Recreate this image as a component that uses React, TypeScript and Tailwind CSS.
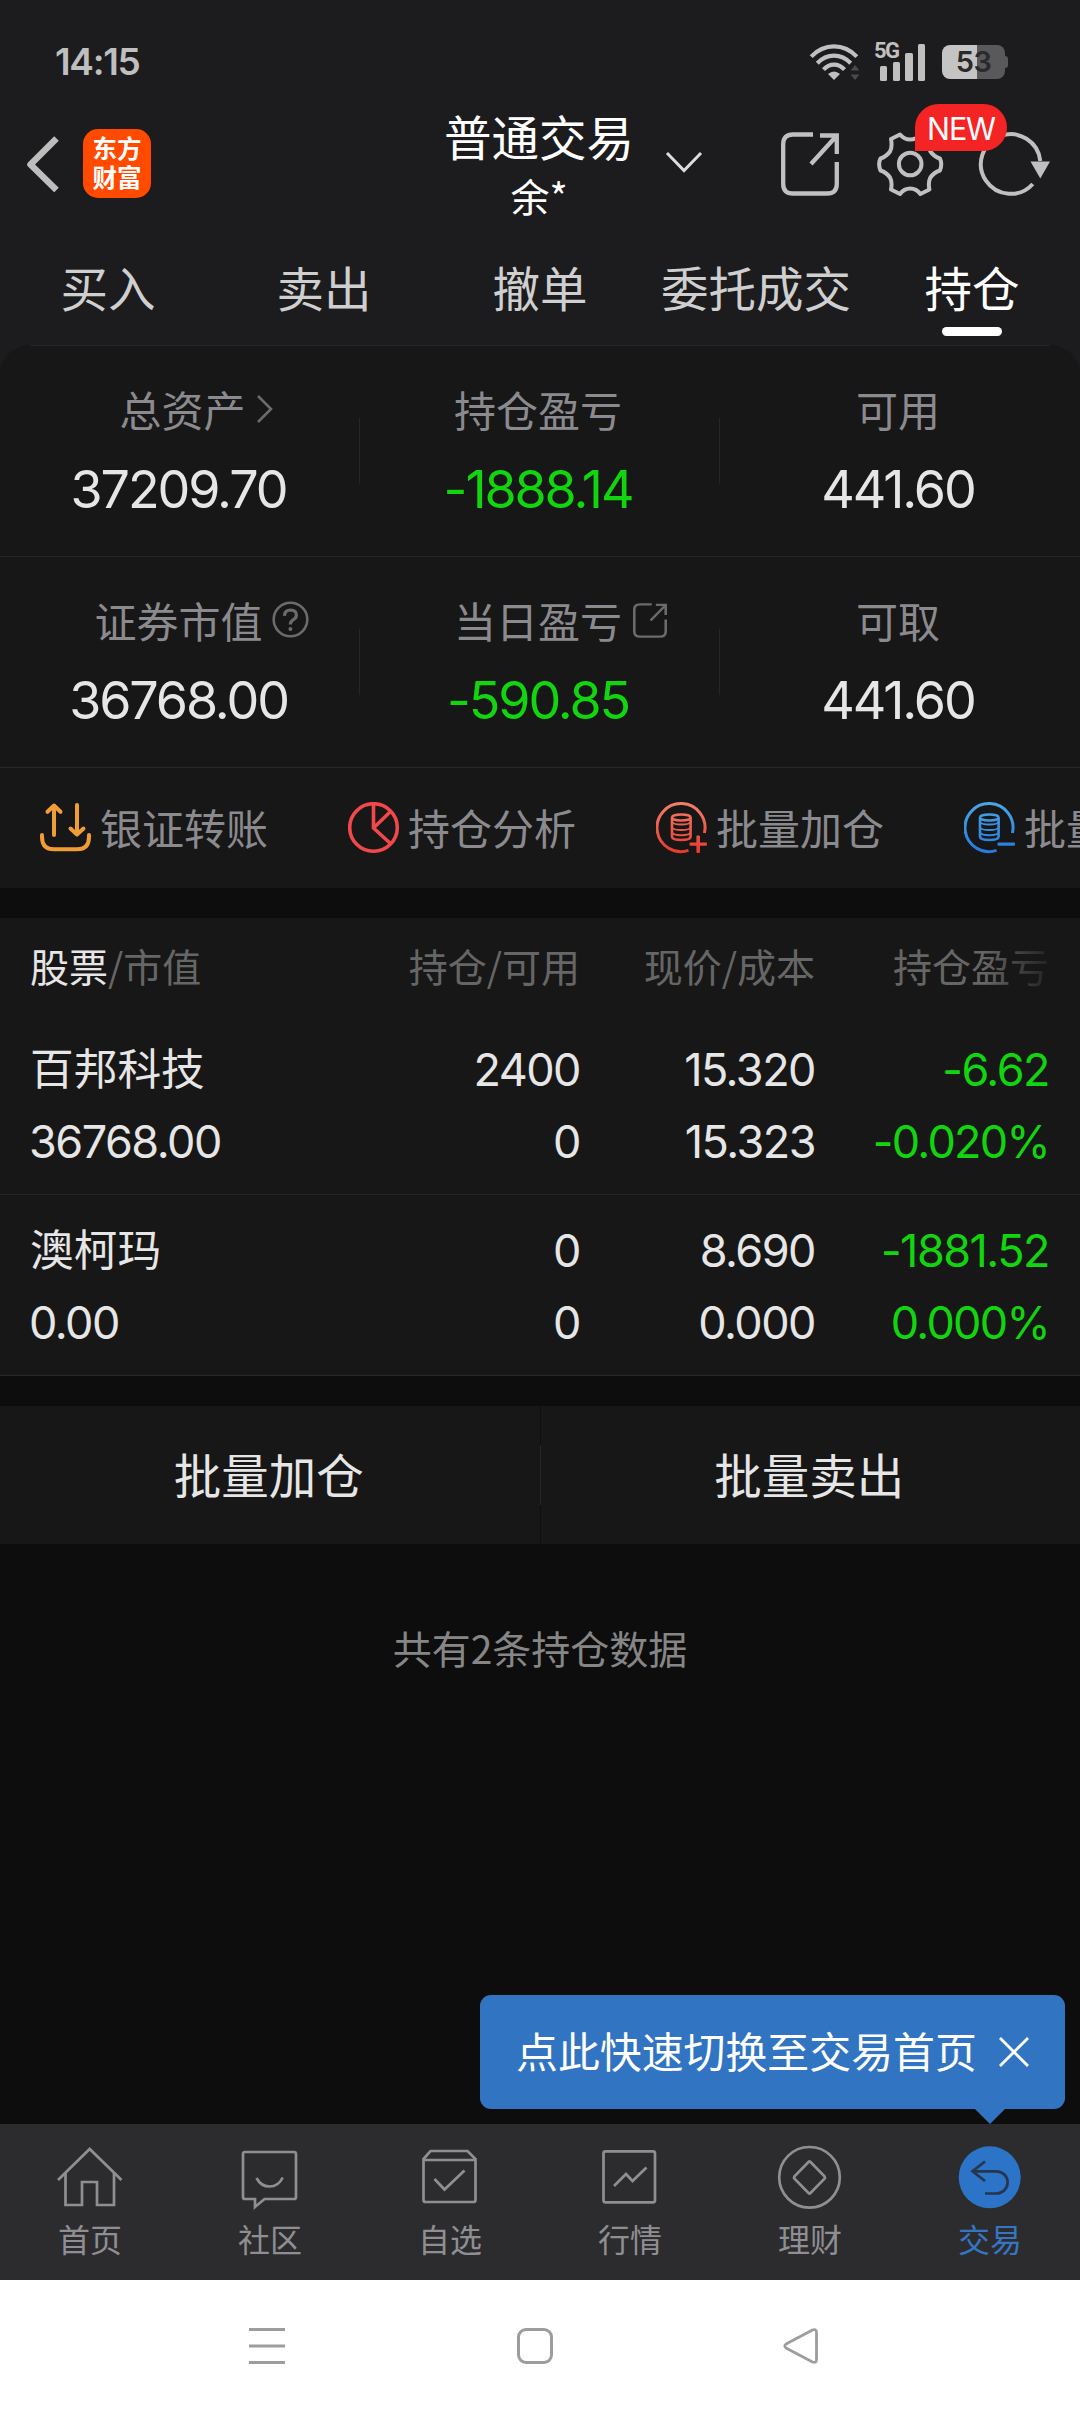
import type { ReactNode } from 'react';

// Type definitions
type Metric = {
  label: string;
  value: string;
  loss?: boolean;
  icon?: ReactNode;
};

type Holding = {
  name: string;
  marketValue: string;
  amount: string;
  available: string;
  price: string;
  cost: string;
  profit: string;
  percent: string;
};

const holdings: Holding[] = [
  {
    name: '百邦科技',
    marketValue: '36768.00',
    amount: '2400',
    available: '0',
    price: '15.320',
    cost: '15.323',
    profit: '-6.62',
    percent: '-0.020%',
  },
  {
    name: '澳柯玛',
    marketValue: '0.00',
    amount: '0',
    available: '0',
    price: '8.690',
    cost: '0.000',
    profit: '-1881.52',
    percent: '0.000%',
  },
];

const tabs = ['买入', '卖出', '撤单', '委托成交', '持仓'];

function ShareIcon({ className, strokeWidth }: { className: string; strokeWidth: number }) {
  return (
    <svg className={className} viewBox="0 0 58 64" fill="none" stroke="currentColor" strokeWidth={strokeWidth} preserveAspectRatio="none">
      <path d="M32 2.5H12Q2.2 2.5 2.2 12V52Q2.2 61.5 12 61.5H46Q55.8 61.5 55.8 52V30" />
      <path d="M39 3.5H55.8V22M55 4.5L30 32" />
    </svg>
  );
}

const metricRows: Metric[][] = [
  [
    {
      label: '总资产',
      value: '37209.70',
      icon: (
        <svg className="ml-[10px] h-[28px] w-[18px] shrink-0 text-[#6b6b6b]" viewBox="0 0 18 28" fill="none" stroke="currentColor" strokeWidth={2.6}>
          <path d="M2 1L15 14L2 27" />
        </svg>
      ),
    },
    { label: '持仓盈亏', value: '-1888.14', loss: true },
    { label: '可用', value: '441.60' },
  ],
  [
    {
      label: '证券市值',
      value: '36768.00',
      icon: (
        <svg className="mb-px ml-[9px] h-[37px] w-[37px] shrink-0 text-[#6b6b6b]" viewBox="0 0 37 37" fill="none" stroke="currentColor" strokeWidth={2.6}>
          <circle cx="18.5" cy="18.5" r="16.8" />
          <path d="M12.5 14.8Q12.8 9 18.5 9Q24.4 9.2 24.4 14.2Q24.4 17 21 18.8Q18.4 20.4 18.4 23.6" strokeWidth={3.2} />
          <circle cx="18.4" cy="28" r="2" fill="currentColor" stroke="none" />
        </svg>
      ),
    },
    {
      label: '当日盈亏',
      value: '-590.85',
      loss: true,
      icon: <ShareIcon className="ml-[11px] h-[35px] w-[34px] shrink-0 text-[#6b6b6b]" strokeWidth={4.4} />,
    },
    { label: '可取', value: '441.60' },
  ],
];

// Stack of coins inside an open ring, shared by the batch actions
function CoinsIcon({ id, from, to, plus }: { id: string; from: string; to: string; plus?: boolean }) {
  return (
    <svg className="h-[52px] w-[52px] shrink-0" viewBox="0 0 52 52" fill="none" stroke={`url(#${id})`} strokeWidth={3}>
      <defs>
        <linearGradient id={id} gradientUnits="userSpaceOnUse" x1="0" y1="0" x2="0" y2="52">
          <stop offset="0" stopColor={from} />
          <stop offset="1" stopColor={to} />
        </linearGradient>
      </defs>
      <path d="M48.4 31A24 24 0 1 0 32.5 48.4" />
      <ellipse cx="25.3" cy="15.5" rx="9.3" ry="3" strokeWidth={2.4} />
      <path d="M16 15.5V34.5Q16 38 25.3 38Q34.6 38 34.6 34.5V15.5" strokeWidth={2.6} />
      <path d="M16 20Q17 22.5 25.3 22.5Q33.6 22.5 34.6 20M16 25.5Q17 28 25.3 28Q33.6 28 34.6 25.5M16 30.7Q17 33.2 25.3 33.2Q33.6 33.2 34.6 30.7" strokeWidth={2} />
      <rect x="33.5" y="40.4" width="17.5" height="3.4" rx="1" fill={`url(#${id})`} stroke="none" />
      {plus && <rect x="40.4" y="33.5" width="3.6" height="17.5" rx="1" fill={`url(#${id})`} stroke="none" />}
    </svg>
  );
}

const actions = [
  {
    label: '银证转账',
    icon: (
      <svg className="h-[52px] w-[52px] shrink-0 text-[#f09d35]" viewBox="0 0 52 52" fill="none" stroke="currentColor" strokeWidth={4} strokeLinecap="round" strokeLinejoin="round">
        <path d="M14 33V4M7.5 9.8L14 3.5L20.5 9.8" />
        <path d="M37 3V32M30.5 26.5L37 32.5L43.5 26.5" />
        <path d="M2 33V35Q2 47.3 14 47.3H37Q49 47.3 49 35V33" />
      </svg>
    ),
  },
  {
    label: '持仓分析',
    icon: (
      <svg className="h-[52px] w-[52px] shrink-0 text-[#f0484b]" viewBox="0 0 52 52" fill="none" stroke="currentColor" strokeWidth={3.6}>
        <circle cx="25.5" cy="25.5" r="23.8" />
        <path d="M25.5 2V26L43 42M25.5 26L42.5 9.5" />
      </svg>
    ),
  },
  { label: '批量加仓', icon: <CoinsIcon id="coins-add" from="#f4806c" to="#e8382a" plus /> },
  { label: '批量卖出', icon: <CoinsIcon id="coins-sell" from="#4ba6e6" to="#2479dd" /> },
];

const navItems = [
  {
    label: '首页',
    icon: (
      <>
        <path d="M4 39L35.7 8L67.5 39" />
        <path d="M11.5 32V64H28V41H43V64H60V32" />
      </>
    ),
  },
  {
    label: '社区',
    icon: (
      <>
        <path d="M11 11H60Q62 11 62 13V56Q62 58 60 58H30.5L21 66V58H11Q9 58 9 56V13Q9 11 11 11Z" />
        <path d="M22.5 37Q27 45.5 35.5 45.5Q44.5 45.5 48.7 36.5" />
      </>
    ),
  },
  {
    label: '自选',
    icon: (
      <>
        <path d="M9.5 18L16.5 10H53.5L61.5 18V59Q61.5 61 59.5 61H11.5Q9.5 61 9.5 59ZM9.5 19H61.5" />
        <path d="M20.5 38L30.5 48.5L50.5 29.5" />
      </>
    ),
  },
  {
    label: '行情',
    icon: (
      <>
        <rect x="9.5" y="10.3" width="51.5" height="51" rx="2" />
        <path d="M20 45L32 33L38.5 40L52.5 26.5" />
      </>
    ),
  },
  {
    label: '理财',
    icon: (
      <>
        <circle cx="35.5" cy="36.3" r="30.3" />
        <path d="M34.5 21L20.5 35.3Q19.6 36.5 20.5 37.7L34.5 52Q35.5 53 36.5 52L50.5 37.7Q51.4 36.5 50.5 35.3L36.5 21Q35.5 20 34.5 21Z" />
      </>
    ),
  },
  {
    label: '交易',
    active: true,
    icon: (
      <>
        <circle cx="35.7" cy="36.3" r="31" fill="#2b74c8" stroke="none" />
        <path d="M31 20.5L18.5 30.3L31 40M18.5 30.3H42.5A11 11 0 0 1 42.5 52.5H31" stroke="#26364f" />
      </>
    ),
  },
];

function StatusBar() {
  return (
    <div className="flex h-[100px] items-center pt-6 pr-[75px] pl-[55px]">
      <span className="font-['Inter',sans-serif] text-[37px] font-semibold tracking-[-1.3px] text-[#bfbfbf]">14:15</span>
      <svg className="ml-auto h-[40px] w-[52px] text-[#c0c0c0]" viewBox="0 0 52 40" fill="none" stroke="currentColor" strokeWidth={4.2}>
        <path d="M2.2 14.6Q12 4.4 25 4.4Q38 4.4 47.8 14.6" />
        <path d="M8.3 21.2Q15.5 13.6 25 13.6Q34.5 13.6 41.7 21.2" />
        <path d="M14.5 27.6Q19 22.6 25 22.6Q31 22.6 35.5 27.6" />
        <path d="M19 32Q25 26.8 31 32L25 38Z" fill="currentColor" stroke="none" />
        <path d="M41.5 28.5L46 23L50.5 28.5ZM41.5 32.5L46 38L50.5 32.5Z" fill="#4a4a4c" stroke="none" />
      </svg>
      <div className="ml-[13px] flex h-[38px] w-[52px]">
        <span className="relative w-0">
          <span className="absolute -top-[3px] left-0 font-['Roboto',sans-serif] text-[22px] leading-[22px] font-bold tracking-[-1.5px] text-[#c0c0c0]">5G</span>
        </span>
        <div className="ml-[6px] flex items-end gap-[5.5px]">
          <i className="h-[15px] w-[7.2px] rounded-[1.5px] bg-[#c0c0c0]" />
          <i className="h-[19px] w-[7.2px] rounded-[1.5px] bg-[#c0c0c0]" />
          <i className="h-[28px] w-[7.2px] rounded-[1.5px] bg-[#c0c0c0]" />
          <i className="h-[37px] w-[7.2px] rounded-[1.5px] bg-[#c0c0c0]" />
        </div>
      </div>
      <div className="ml-[16px] flex items-center">
        <div className="flex h-[34px] w-[63px] items-center justify-center rounded-[8px] bg-linear-to-r from-[#c4c4c4] from-56% to-[#59595b] to-56% font-['Inter',sans-serif] text-[29px] font-semibold tracking-[-0.5px] text-[#2a2a2b]">
          53
        </div>
        <i className="-mr-[3px] h-[12px] w-[3px] rounded-r-[3px] bg-[#59595b]" />
      </div>
    </div>
  );
}

function TitleBar() {
  return (
    <div className="flex h-[127px] items-center">
      <svg className="ml-[26px] h-[56px] w-[34px] text-[#bdbdbd]" viewBox="0 0 34 56" fill="none" stroke="currentColor" strokeWidth={6.5} strokeLinejoin="round">
        <path d="M30.5 2.5L4.5 28.5L30.5 54" />
      </svg>
      <div className="ml-[23px] flex h-[69px] w-[68px] flex-col items-center justify-center rounded-[15px] bg-[#ff4a00] pb-[3px] text-[24.5px] leading-[29px] font-bold text-white">
        <span>东方</span>
        <span>财富</span>
      </div>
      <div className="ml-[293px] flex w-[190px] flex-col items-center text-white">
        <span className="mt-[3px] text-[47.5px] leading-[60px]">普通交易</span>
        <span className="text-[39px] leading-[58px]">余*</span>
      </div>
      <svg className="mb-[3px] ml-[31px] h-[22px] w-[38px] text-[#dcdcdc]" viewBox="0 0 38 22" fill="none" stroke="currentColor" strokeWidth={3}>
        <path d="M2 2L19 19.5L36 2" />
      </svg>
      <ShareIcon className="ml-[78px] h-[64px] w-[58px] text-[#c0c0c0]" strokeWidth={4.3} />
      <div className="relative ml-[37px]">
        <svg className="h-[66px] w-[68px] text-[#c0c0c0]" viewBox="0 0 68 66" fill="none" stroke="currentColor" strokeWidth={4} strokeLinejoin="round">
          <path d="M24 3.5L15 8Q16.5 16 14 20.5Q10.5 25.5 4.5 27.5Q1.8 33 4.5 39.5Q10.5 41.5 14 46.5Q16.5 51 15 58.5L24 63Q28 57.5 34.2 57.5Q40.4 57.5 44.4 63L53.4 58.5Q51.9 51 54.4 46.5Q57.9 41.5 63.9 39.5Q66.6 33 63.9 27.5Q57.9 25.5 54.4 20.5Q51.9 16 53.4 8L44.4 3.5Q40.4 8.5 34.2 8.5Q28 8.5 24 3.5Z" />
          <circle cx="34.2" cy="33" r="11.3" />
        </svg>
        <div className="absolute -top-[27px] left-[39px] z-10 flex h-[47px] w-[92px] items-center justify-center rounded-[24px] rounded-bl-none bg-[#f42425] pt-[3px] font-['Inter',sans-serif] text-[30.5px] tracking-[-1.2px] text-white">
          NEW
        </div>
      </div>
      <svg className="ml-[34px] h-[66px] w-[74px] text-[#c0c0c0]" viewBox="0 0 74 66" fill="none" stroke="currentColor" strokeWidth={4}>
        <path d="M62.3 30A29.8 29.8 0 1 0 54.8 53" />
        <path d="M52.5 30.5H72L62.3 47.5Z" fill="currentColor" stroke="none" />
      </svg>
    </div>
  );
}

function MetricCell({ label, value, loss, icon }: Metric) {
  return (
    <div className="flex flex-1 flex-col items-center pr-[3px]">
      <div className={`flex h-[60px] items-center text-[42px] leading-[60px] text-[#8b8a8f] ${label === '总资产' ? 'pl-[8px]' : ''}`}>
        <span>{label}</span>
        {/* zero width keeps the label itself centred in the column */}
        {icon && <span className="flex w-0 items-center">{icon}</span>}
      </div>
      <div className={`mt-[21px] font-['Inter',sans-serif] text-[52px] leading-[60px] tracking-[-2.1px] ${loss ? 'text-[#12d40f]' : 'text-[#e6e6e6]'}`}>
        {value}
      </div>
    </div>
  );
}

function HoldingRow({ item }: { item: Holding }) {
  return (
    <div className="grid h-[181px] grid-cols-[280px_270px_235px_234px] content-start border-b border-[#262626] px-[30px] pt-[20px] text-right font-['Inter','Noto_Sans_CJK_SC',sans-serif] text-[45px] leading-[72px] tracking-[-1.5px] text-[#e6e6e6]">
      <span className="text-left text-[43.7px] tracking-normal">{item.name}</span>
      <span>{item.amount}</span>
      <span>{item.price}</span>
      <span className="text-[#12d40f]">{item.profit}</span>
      <span className="-ml-px text-left">{item.marketValue}</span>
      <span>{item.available}</span>
      <span>{item.cost}</span>
      <span className="tracking-[-1.7px] text-[#12d40f]">{item.percent}</span>
    </div>
  );
}

export default function App() {
  return (
    <div className="flex h-[2412px] w-[1080px] flex-col overflow-hidden bg-[#0d0d0d] font-['Noto_Sans_CJK_SC',sans-serif]">
      <header className="bg-[#1c1c1e]">
        <StatusBar />
        <TitleBar />
        <nav className="flex h-[118px] pt-[30px]">
          {tabs.map((tab) => (
            <div key={tab} className="flex w-[216px] flex-col items-center">
              <span className={`text-[47.5px] leading-[60px] ${tab === '持仓' ? 'text-white' : 'text-[#cfcfcf]'}`}>{tab}</span>
              {tab === '持仓' && <i className="mt-[10px] h-[9px] w-[60px] rounded-full bg-white" />}
            </div>
          ))}
        </nav>
      </header>

      {/* Account summary */}
      <div className="bg-[#1c1c1e]">
        <section className="rounded-t-[30px] bg-[#171717]">
          <div className="mx-[30px] h-px bg-[#262626]" />
          {metricRows.map((row, i) => (
            <div key={i} className="flex h-[211px] items-start border-b border-[#262626] pt-[33px]">
              {row.map((metric, j) => (
                <div key={metric.label} className="flex flex-1">
                  {j > 0 && <i className="mt-[39px] -mr-px -ml-px h-[66px] w-px bg-[#262626]" />}
                  <MetricCell {...metric} />
                </div>
              ))}
            </div>
          ))}
          <div className="flex h-[120px] items-center overflow-hidden pl-[40px]">
            {actions.map((action) => (
              <div key={action.label} className="flex w-[308px] shrink-0 items-center gap-[8px]">
                {action.icon}
                <span className="pb-[3px] text-[42px] leading-[60px] whitespace-nowrap text-[#8b8a8f]">{action.label}</span>
              </div>
            ))}
          </div>
        </section>
      </div>

      {/* Holdings table */}
      <section className="mt-[30px] bg-[#171717]">
        <div className="relative grid h-[96px] grid-cols-[280px_270px_235px_234px] px-[30px] text-right text-[39px] leading-[94px] text-[#666666]">
          <span className="text-left">
            <span className="text-[#e6e6e6]">股票</span>/市值
          </span>
          <span>持仓/可用</span>
          <span>现价/成本</span>
          <span>持仓盈亏</span>
          <i className="absolute top-0 right-0 h-full w-[96px] bg-linear-to-r from-transparent to-[#171717] to-80%" />
        </div>
        {holdings.map((item) => (
          <HoldingRow key={item.name} item={item} />
        ))}
      </section>

      <div className="mt-[30px] flex h-[138px] items-center bg-[#171717] text-[47.5px] text-[#e6e6e6]">
        <span className="flex-1 pr-[3px] pb-[3px] text-center">批量加仓</span>
        <i className="-ml-px flex h-full w-px items-center bg-[#0f0f0f]">
          <i className="h-[60px] w-px bg-[#262626]" />
        </i>
        <span className="flex-1 pr-[2px] pb-[3px] text-center">批量卖出</span>
      </div>

      <p className="mt-[74px] text-center text-[39px] leading-[58px] text-[#868686]">共有2条持仓数据</p>

      {/* Bottom navigation with its hint bubble */}
      <div className="relative mt-auto flex h-[156px] bg-[#2c2c2e]">
        <div className="absolute right-[15px] bottom-[171px] flex h-[114px] w-[585px] items-center rounded-[11px] bg-[#3174c1] pl-[36px] text-[41.9px] text-white">
          <span className="pb-[4px] whitespace-nowrap">点此快速切换至交易首页</span>
          <svg className="ml-[21px] h-[32px] w-[32px]" viewBox="0 0 32 32" fill="none" stroke="currentColor" strokeWidth={2.8}>
            <path d="M2 2L30 30M30 2L2 30" />
          </svg>
          <svg className="absolute top-full right-[60px] h-[15px] w-[30px] text-[#3174c1]" viewBox="0 0 30 15" fill="currentColor">
            <path d="M0 0H30L15 15Z" />
          </svg>
        </div>
        {navItems.map((item) => (
          <div key={item.label} className={`flex w-[180px] flex-col items-center pt-[17px] ${item.active ? 'text-[#3575c4]' : 'text-[#8f8f93]'}`}>
            <svg className="h-[72px] w-[72px]" viewBox="0 0 72 72" fill="none" stroke="currentColor" strokeWidth={2.7}>
              {item.icon}
            </svg>
            <span className="mt-[4px] text-[32px] leading-[42px]">{item.label}</span>
          </div>
        ))}
      </div>

      {/* System keys */}
      <div className="flex h-[132px] items-center bg-white text-[#9d9d9d]">
        <svg className="ml-[249px] h-[38px] w-[36px]" viewBox="0 0 36 38" fill="none" stroke="currentColor" strokeWidth={3.2}>
          <path d="M0 2.5H36M0 19H36M0 35.5H36" />
        </svg>
        <i className="ml-[232px] h-[36px] w-[36px] rounded-[9px] border-3 border-current" />
        <svg className="ml-[230px] h-[38px] w-[36px]" viewBox="0 0 36 38" fill="none" stroke="currentColor" strokeWidth={2.8} strokeLinejoin="round">
          <path d="M3 17L29.5 3Q33.5 1.5 33.5 5.5V32.5Q33.5 36.5 29.5 35L3 21Q0.5 19 3 17Z" />
        </svg>
      </div>
    </div>
  );
}
